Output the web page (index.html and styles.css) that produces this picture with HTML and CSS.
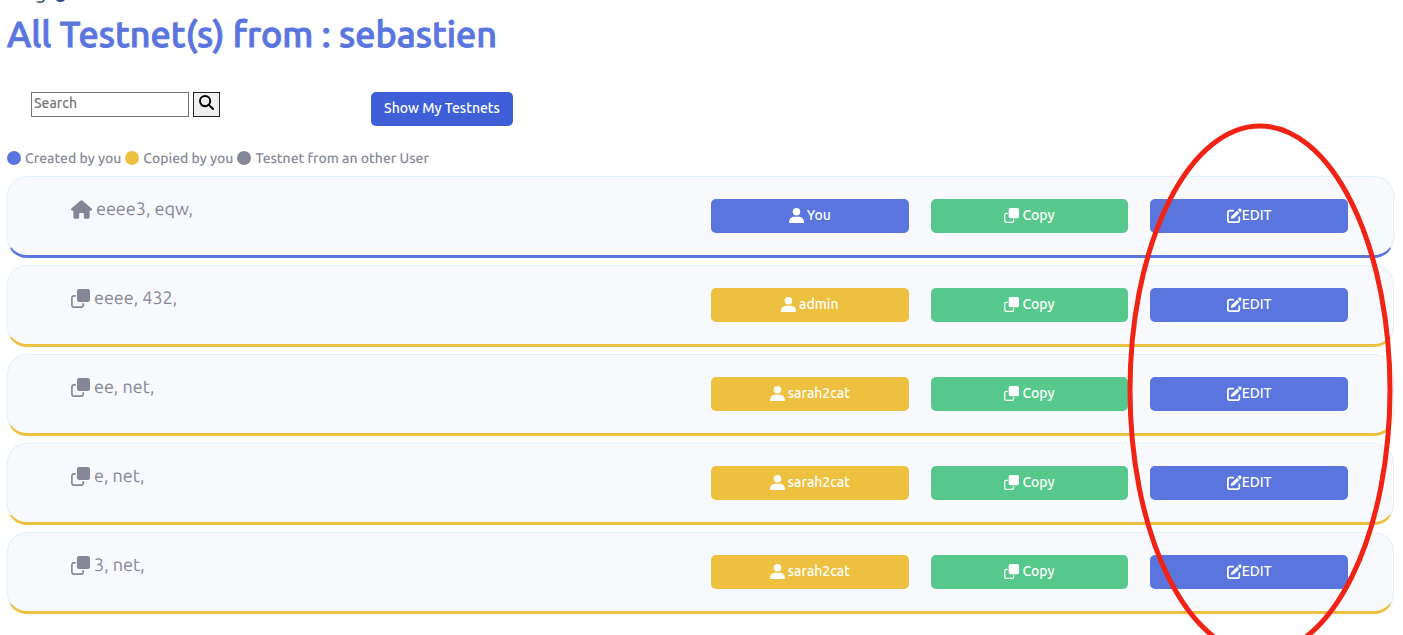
FILE: index.html
```html
<!DOCTYPE html>
<html lang="en">
<head>
<meta charset="utf-8">
<title>Testnets</title>
<link rel="stylesheet" href="styles.css">
</head>
<body>
<svg class="sprite" aria-hidden="true">
  <symbol id="user" viewBox="0 0 448 448"><circle cx="224" cy="112" r="112"/><path d="M0 422C0 334 70 264 158 264H290C378 264 448 334 448 422Q448 448 422 448H26Q0 448 0 422Z"/></symbol>
  <symbol id="copy" viewBox="0 0 512 512"><rect x="160" y="0" width="352" height="352" rx="58"/><path d="M128 184H80Q24 184 24 240V432Q24 488 80 488H272Q328 488 328 432V384" fill="none" stroke="currentColor" stroke-width="44"/></symbol>
  <symbol id="home" viewBox="0 0 576 512"><path d="M575.800 255.500c0 18-15 32.100-32 32.100h-32l.7 160.200c0 35.300-20 64.200-48 64.200H392c-22 0-40-18-40-40V384c0-17.700-14.300-32-32-32h-64c-17.700 0-32 14.300-32 32v88c0 22-18 40-40 40H112c-28 0-48-24-48-52V287.600H32c-18 0-32-14-32-32.100 0-9 3-17 10-24L266.400 8c7-7 15-8 22-8s15 2 21 7L564.800 231.500c8 7 12 15 11 24z"/></symbol>
  <symbol id="edit" viewBox="0 0 512 512"><path d="M180 256L345 91l76 76-165 165c-8 8-18 14-29 17l-76 22c-6 2-12 0-16-4s-6-10-4-16l22-76c3-11 9-21 27-19zM368 68l32-32c22-22 58-22 80 0s22 58 0 80l-36 36z"/><path d="M210 92H96Q30 92 30 158V416Q30 482 96 482H354Q420 482 420 416V312" fill="none" stroke="currentColor" stroke-width="60" stroke-linecap="round"/></symbol>
  <symbol id="search" viewBox="0 0 512 512"><circle cx="208" cy="208" r="174" fill="none" stroke="currentColor" stroke-width="68"/><path d="M330 330L480 480" fill="none" stroke="currentColor" stroke-width="68" stroke-linecap="round"/></symbol>
</svg>

<main class="page">
  <div class="clipped"><p class="greeting">g</p><span class="badge"></span></div>
  <h1 class="title">All Testnet(s) from : sebastien</h1>

  <div class="toolbar">
    <form class="search" role="search">
      <input class="search-input" type="text" placeholder="Search" aria-label="Search">
      <button class="search-button" type="button" aria-label="Search"><svg class="icon"><use href="#search"/></svg></button>
    </form>
    <button class="button show" type="button">Show My Testnets</button>
  </div>

  <div class="legend">
    <span class="key"><span class="dot blue"></span>Created by you</span>
    <span class="key"><span class="dot yellow"></span>Copied by you</span>
    <span class="key"><span class="dot grey"></span>Testnet from an other User</span>
  </div>

  <div class="list">
    <article class="card own">
      <h2 class="name"><svg class="icon home"><use href="#home"/></svg>eeee3, eqw,</h2>
      <button class="button blue" type="button"><svg class="icon"><use href="#user"/></svg>You</button>
      <button class="button green" type="button"><svg class="icon"><use href="#copy"/></svg>Copy</button>
      <button class="button blue edit" type="button"><svg class="icon"><use href="#edit"/></svg>EDIT</button>
    </article>
    <article class="card">
      <h2 class="name"><svg class="icon"><use href="#copy"/></svg>eeee, 432,</h2>
      <button class="button yellow" type="button"><svg class="icon"><use href="#user"/></svg>admin</button>
      <button class="button green" type="button"><svg class="icon"><use href="#copy"/></svg>Copy</button>
      <button class="button blue edit" type="button"><svg class="icon"><use href="#edit"/></svg>EDIT</button>
    </article>
    <article class="card">
      <h2 class="name"><svg class="icon"><use href="#copy"/></svg>ee, net,</h2>
      <button class="button yellow" type="button"><svg class="icon"><use href="#user"/></svg>sarah2cat</button>
      <button class="button green" type="button"><svg class="icon"><use href="#copy"/></svg>Copy</button>
      <button class="button blue edit" type="button"><svg class="icon"><use href="#edit"/></svg>EDIT</button>
    </article>
    <article class="card">
      <h2 class="name"><svg class="icon"><use href="#copy"/></svg>e, net,</h2>
      <button class="button yellow" type="button"><svg class="icon"><use href="#user"/></svg>sarah2cat</button>
      <button class="button green" type="button"><svg class="icon"><use href="#copy"/></svg>Copy</button>
      <button class="button blue edit" type="button"><svg class="icon"><use href="#edit"/></svg>EDIT</button>
    </article>
    <article class="card">
      <h2 class="name"><svg class="icon"><use href="#copy"/></svg>3, net,</h2>
      <button class="button yellow" type="button"><svg class="icon"><use href="#user"/></svg>sarah2cat</button>
      <button class="button green" type="button"><svg class="icon"><use href="#copy"/></svg>Copy</button>
      <button class="button blue edit" type="button"><svg class="icon"><use href="#edit"/></svg>EDIT</button>
    </article>
  </div>
</main>
<svg class="marker" viewBox="0 0 267 534" aria-hidden="true"><ellipse cx="133" cy="267" rx="130" ry="264"/></svg>
</body>
</html>
```
FILE: styles.css
```css
* { box-sizing: border-box; }
body {
  margin: 0;
  height: 100vh;
  overflow: hidden;
  position: relative;
  background: #fff;
  color: #858796;
  font-family: Ubuntu, "Noto Sans", sans-serif;
  font-size: 14px;
  font-weight: 500;
  line-height: 20px;
  text-rendering: geometricPrecision;
}
.sprite { position: absolute; width: 0; height: 0; }
.page { padding: 0 9px 0 7px; }
.clipped {
  display: flex;
  align-items: flex-end;
  gap: 8px;
  height: 8px;
  padding: 0 28px 4px;
  overflow: hidden;
}
.greeting { margin: 0; color: #2e3a59; font-size: 20px; line-height: 24px; font-weight: 400; }
.badge { width: 11px; height: 11px; margin-bottom: 2px; border-radius: 50%; background: #33467e; }
.title {
  margin: 0;
  color: #5a76de;
  font-size: 36px;
  line-height: 52px;
  font-weight: 500;
  -webkit-text-stroke: 1px #5a76de;
}
.toolbar { display: flex; padding: 32px 24px 0; }
.search { display: flex; gap: 4px; width: 340px; height: 25px; }
.search-input {
  width: 158px;
  padding: 0 2px 4px;
  border: 1px solid #767676;
  font: inherit;
}
.search-input::placeholder { color: #757575; }
.search-button {
  width: 27px;
  padding: 0 5px 2px;
  border: 1px solid #222;
  background: #efefef;
  color: #000;
}
.icon { width: 15px; height: 15px; fill: currentColor; flex: none; overflow: visible; }
.button {
  display: flex;
  align-items: center;
  justify-content: center;
  gap: 3px;
  height: 34px;
  padding: 0 12px 2px;
  border: 0;
  border-radius: 5px;
  color: #fff;
  font: inherit;
  white-space: nowrap;
}
.show { min-width: 142px; background: #3f5fd8; }
.legend { display: flex; gap: 4px; padding: 22px 0 8px; }
.key { display: flex; align-items: center; gap: 4px; }
.dot { width: 14px; height: 14px; border-radius: 50%; }
.blue { background: #5a76de; }
.yellow { background: #edc040; }
.green { background: #57c88c; }
.grey { background: #858796; }
.list { display: grid; gap: 7px; }
.card {
  display: grid;
  grid-template-columns: repeat(12, 1fr);
  column-gap: 22px;
  align-items: start;
  height: 82px;
  padding: 22px 45px 0 44px;
  background: #f8f9fd;
  border: 1px solid #e0effc;
  border-bottom: 3px solid #edc040;
  border-radius: 20px;
}
.own { border-bottom-color: #5a76de; }
.name {
  grid-column: span 6;
  display: flex;
  align-items: center;
  gap: 4px;
  margin: 0;
  padding-left: 19px;
  font-size: 18px;
  line-height: 20px;
  font-weight: 400;
}
.name .icon { width: 19px; height: 19px; }
.name .home { width: 21px; }
.card .button { grid-column: span 2; }
.edit { gap: 0; }
.marker {
  position: absolute;
  top: 123px;
  right: 9px;
  width: 267px;
  height: 534px;
  fill: none;
  stroke: #f02314;
  stroke-width: 5px;
}
```
